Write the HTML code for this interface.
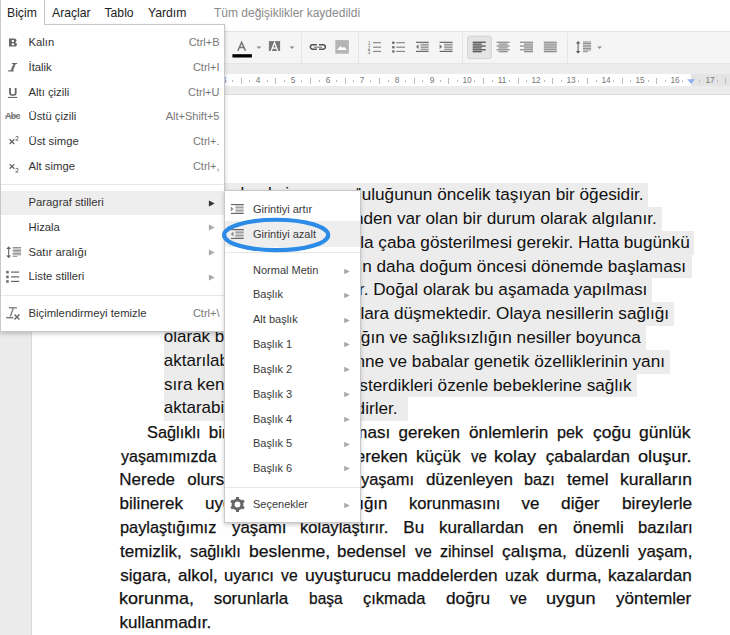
<!DOCTYPE html><html><head><meta charset="utf-8"><style>
*{margin:0;padding:0;box-sizing:border-box}
html,body{width:730px;height:635px;overflow:hidden;background:#fff;font-family:"Liberation Sans",sans-serif;position:relative}
.ab{position:absolute}
#gutter{position:absolute;left:0;top:95px;width:32px;height:540px;background:#ebebeb;border-right:1px solid #dadada}
.sel{position:absolute;background:#ececec}
.t{position:absolute;font-size:17px;color:#111;white-space:pre;line-height:20px;height:20px}
.tb{-webkit-text-stroke:0.25px #111}
.j{text-align:justify;text-align-last:justify;overflow:visible}
.menu{position:absolute;background:#fff;border:1px solid #c8c8c8;box-shadow:0 2px 4px rgba(0,0,0,.2)}
.mi{position:absolute;font-size:11.3px;color:#333;line-height:13px;white-space:pre}
.sm{color:#3a3a3a;font-size:11px}
.sc{position:absolute;font-size:11px;color:#777;line-height:13px;white-space:pre;text-align:right}
.arr{position:absolute;width:0;height:0;border-left:5.5px solid #a8a8a8;border-top:2.7px solid transparent;border-bottom:2.7px solid transparent}
.sep{position:absolute;height:1px;background:#e8e8e8}
.mb{position:absolute;top:5.6px;font-size:12.2px;color:#222;line-height:15px;white-space:pre}
.rn{position:absolute;top:75.3px;font-size:9px;color:#777;line-height:10px;width:20px;text-align:center;transform:scaleX(0.92)}
.tk{position:absolute;background:#bdbdbd;width:1px}
</style></head><body>
<div id="gutter"></div>
<div class="sel" style="left:163.5px;top:183.00px;width:484.70px;height:23.9px"></div>
<div class="sel" style="left:163.5px;top:206.81px;width:498.00px;height:23.9px"></div>
<div class="sel" style="left:163.5px;top:230.62px;width:530.50px;height:23.9px"></div>
<div class="sel" style="left:163.5px;top:254.43px;width:528.50px;height:23.9px"></div>
<div class="sel" style="left:163.5px;top:278.24px;width:488.50px;height:23.9px"></div>
<div class="sel" style="left:163.5px;top:302.05px;width:510.10px;height:23.9px"></div>
<div class="sel" style="left:163.5px;top:325.86px;width:482.50px;height:23.9px"></div>
<div class="sel" style="left:163.5px;top:349.67px;width:506.00px;height:23.9px"></div>
<div class="sel" style="left:163.5px;top:373.48px;width:473.20px;height:23.9px"></div>
<div class="sel" style="left:163.5px;top:397.29px;width:244.90px;height:23.9px"></div>
<div class="t" style="left:358px;width:285.55px;top:184.10px;overflow:hidden;text-align:right;direction:ltr;font-size:17.2px"><span style="float:right">Anne ve bebek sağlığı toplum mutluluğunun öncelik taşıyan bir öğesidir.</span></div>
<div class="t" style="left:300px;width:356.75px;top:207.91px;overflow:hidden;text-align:right;direction:ltr;font-size:17.2px"><span style="float:right">çoğu zaman doğumdan öncesinden var olan bir durum olarak algılanır.</span></div>
<div class="t" style="left:300px;width:389.78px;top:231.72px;overflow:hidden;text-align:right;direction:ltr;font-size:17.2px"><span style="float:right">Bu nedenle daha fazla çaba gösterilmesi gerekir. Hatta bugünkü</span></div>
<div class="t" style="left:300px;width:386.12px;top:255.53px;overflow:hidden;text-align:right;direction:ltr;font-size:17.2px"><span style="float:right">çabalarının daha doğum öncesi dönemde başlaması</span></div>
<div class="t" style="left:300px;width:347.42px;top:279.34px;overflow:hidden;text-align:right;direction:ltr;font-size:17.2px"><span style="float:right">gerekir. Doğal olarak bu aşamada yapılması</span></div>
<div class="t" style="left:300px;width:369.02px;top:303.15px;overflow:hidden;text-align:right;direction:ltr;font-size:17.2px"><span style="float:right">görevler anne babalara düşmektedir. Olaya nesillerin sağlığı</span></div>
<div class="t" style="left:300px;width:340.80px;top:326.96px;overflow:hidden;text-align:right;direction:ltr;font-size:17.2px"><span style="float:right">bakıldığında sağlığın ve sağlıksızlığın nesiller boyunca</span></div>
<div class="t" style="left:300px;width:365.02px;top:350.77px;overflow:hidden;text-align:right;direction:ltr;font-size:17.2px"><span style="float:right">bildiği görülür. Anne ve babalar genetik özelliklerinin yanı</span></div>
<div class="t" style="left:300px;width:331.58px;top:374.58px;overflow:hidden;text-align:right;direction:ltr;font-size:17.2px"><span style="float:right">sağlıklarına gösterdikleri özenle bebeklerine sağlık</span></div>
<div class="t" style="left:300px;width:97.65px;top:398.39px;overflow:hidden;text-align:right;direction:ltr;font-size:17.2px"><span style="float:right">hastalık bırakabilmektedirler.</span></div>
<div class="t" style="left:240.45px;top:184.10px">l</div>
<div class="t" style="left:267.95px;top:184.10px">l</div>
<div class="t" style="left:285.16px;top:184.10px">i</div>
<div class="t" style="left:355.14px;top:184.10px">t</div>
<div class="t" style="left:163.79px;top:326.96px;width:60.21px;overflow:hidden">olarak bakıldığında</div>
<div class="t" style="left:163.78px;top:350.77px;width:60.22px;overflow:hidden">aktarılabildiği</div>
<div class="t" style="left:164.03px;top:374.58px;width:59.97px;overflow:hidden">sıra kendi</div>
<div class="t" style="left:163.78px;top:398.39px;width:60.22px;overflow:hidden">aktarabilirler</div>
<div class="t tb" style="left:147.26px;top:422.70px;transform:scaleX(0.9596);transform-origin:0 0">Sağlıklı</div>
<div class="t tb" style="left:208.80px;top:422.70px">bir</div>
<div class="t tb" style="left:325.89px;top:422.70px">alınması</div>
<div class="t tb" style="left:398.49px;top:422.70px">gereken</div>
<div class="t tb" style="left:468.78px;top:422.70px;transform:scaleX(1.0119);transform-origin:0 0">önlemlerin</div>
<div class="t tb" style="left:556.66px;top:422.70px;transform:scaleX(0.9498);transform-origin:0 0">pek</div>
<div class="t tb" style="left:592.66px;top:422.70px;transform:scaleX(1.0315);transform-origin:0 0">çoğu</div>
<div class="t tb" style="left:639.47px;top:422.70px;transform:scaleX(1.0282);transform-origin:0 0">günlük</div>
<div class="t tb" style="left:120.66px;top:446.51px;transform:scaleX(0.9431);transform-origin:0 0">yaşamımızda</div>
<div class="t tb" style="left:346.36px;top:446.51px">gereken</div>
<div class="t tb" style="left:415.85px;top:446.51px;transform:scaleX(1.0047);transform-origin:0 0">küçük</div>
<div class="t tb" style="left:470.75px;top:446.51px;transform:scaleX(0.8800);transform-origin:0 0">ve</div>
<div class="t tb" style="left:494.29px;top:446.51px;transform:scaleX(1.0567);transform-origin:0 0">kolay</div>
<div class="t tb" style="left:545.78px;top:446.51px">çabalardan</div>
<div class="t tb" style="left:638.14px;top:446.51px;transform:scaleX(1.0685);transform-origin:0 0">oluşur.</div>
<div class="t tb" style="left:119.31px;top:470.32px">Nerede</div>
<div class="t tb" style="left:187.29px;top:470.32px">olursak</div>
<div class="t tb" style="left:361.46px;top:470.32px;transform:scaleX(0.9675);transform-origin:0 0">yaşamı</div>
<div class="t tb" style="left:425.89px;top:470.32px">düzenleyen</div>
<div class="t tb" style="left:524.45px;top:470.32px;transform:scaleX(0.9554);transform-origin:0 0">bazı</div>
<div class="t tb" style="left:567.04px;top:470.32px">temel</div>
<div class="t tb" style="left:620.02px;top:470.32px;transform:scaleX(1.0315);transform-origin:0 0">kuralların</div>
<div class="t tb" style="left:119.60px;top:494.13px">bilinerek</div>
<div class="t tb" style="left:205.10px;top:494.13px">uygulanması</div>
<div class="t tb" style="left:328.00px;top:494.13px">sağlığın</div>
<div class="t tb" style="left:408.58px;top:494.13px;transform:scaleX(0.9765);transform-origin:0 0">korunmasını</div>
<div class="t tb" style="left:521.54px;top:494.13px">ve</div>
<div class="t tb" style="left:561.27px;top:494.13px;transform:scaleX(1.0200);transform-origin:0 0">diğer</div>
<div class="t tb" style="left:621.69px;top:494.13px;transform:scaleX(1.0161);transform-origin:0 0">bireylerle</div>
<div class="t tb" style="left:119.65px;top:517.94px;transform:scaleX(0.9620);transform-origin:0 0">paylaştığımız</div>
<div class="t tb" style="left:231.86px;top:517.94px;transform:scaleX(0.9932);transform-origin:0 0">yaşamı</div>
<div class="t tb" style="left:300.28px;top:517.94px;transform:scaleX(0.9734);transform-origin:0 0">kolaylaştırır.</div>
<div class="t tb" style="left:403.31px;top:517.94px">Bu</div>
<div class="t tb" style="left:438.55px;top:517.94px;transform:scaleX(1.0075);transform-origin:0 0">kurallardan</div>
<div class="t tb" style="left:538.15px;top:517.94px;transform:scaleX(1.0402);transform-origin:0 0">en</div>
<div class="t tb" style="left:572.68px;top:517.94px;transform:scaleX(1.0135);transform-origin:0 0">önemli</div>
<div class="t tb" style="left:637.93px;top:517.94px;transform:scaleX(0.9805);transform-origin:0 0">bazıları</div>
<div class="t tb" style="left:120.44px;top:541.75px;transform:scaleX(1.0056);transform-origin:0 0">temizlik,</div>
<div class="t tb" style="left:190.35px;top:541.75px;transform:scaleX(0.9592);transform-origin:0 0">sağlıklı</div>
<div class="t tb" style="left:248.56px;top:541.75px;transform:scaleX(1.0360);transform-origin:0 0">beslenme,</div>
<div class="t tb" style="left:337.31px;top:541.75px;transform:scaleX(0.9951);transform-origin:0 0">bedensel</div>
<div class="t tb" style="left:414.95px;top:541.75px;transform:scaleX(0.9300);transform-origin:0 0">ve</div>
<div class="t tb" style="left:440.45px;top:541.75px;transform:scaleX(0.9430);transform-origin:0 0">zihinsel</div>
<div class="t tb" style="left:502.26px;top:541.75px;transform:scaleX(1.0245);transform-origin:0 0">çalışma,</div>
<div class="t tb" style="left:574.98px;top:541.75px;transform:scaleX(1.0063);transform-origin:0 0">düzenli</div>
<div class="t tb" style="left:638.16px;top:541.75px;transform:scaleX(0.9920);transform-origin:0 0">yaşam,</div>
<div class="t tb" style="left:120.23px;top:565.56px">sigara,</div>
<div class="t tb" style="left:177.78px;top:565.56px;transform:scaleX(1.0038);transform-origin:0 0">alkol,</div>
<div class="t tb" style="left:223.92px;top:565.56px;transform:scaleX(0.9790);transform-origin:0 0">uyarıcı</div>
<div class="t tb" style="left:281.15px;top:565.56px;transform:scaleX(0.9265);transform-origin:0 0">ve</div>
<div class="t tb" style="left:304.86px;top:565.56px;transform:scaleX(1.0341);transform-origin:0 0">uyuşturucu</div>
<div class="t tb" style="left:397.46px;top:565.56px;transform:scaleX(1.0132);transform-origin:0 0">maddelerden</div>
<div class="t tb" style="left:504.78px;top:565.56px;transform:scaleX(0.9268);transform-origin:0 0">uzak</div>
<div class="t tb" style="left:546.25px;top:565.56px;transform:scaleX(1.0555);transform-origin:0 0">durma,</div>
<div class="t tb" style="left:608.24px;top:565.56px;transform:scaleX(1.0085);transform-origin:0 0">kazalardan</div>
<div class="t tb" style="left:119.49px;top:589.37px;transform:scaleX(1.0570);transform-origin:0 0">korunma,</div>
<div class="t tb" style="left:213.63px;top:589.37px">sorunlarla</div>
<div class="t tb" style="left:308.60px;top:589.37px;transform:scaleX(0.9135);transform-origin:0 0">başa</div>
<div class="t tb" style="left:362.90px;top:589.37px;transform:scaleX(0.9709);transform-origin:0 0">çıkmada</div>
<div class="t tb" style="left:445.88px;top:589.37px;transform:scaleX(1.0129);transform-origin:0 0">doğru</div>
<div class="t tb" style="left:510.05px;top:589.37px;transform:scaleX(0.9378);transform-origin:0 0">ve</div>
<div class="t tb" style="left:546.32px;top:589.37px;transform:scaleX(1.0695);transform-origin:0 0">uygun</div>
<div class="t tb" style="left:615.96px;top:589.37px;transform:scaleX(1.0092);transform-origin:0 0">yöntemler</div>
<div class="t tb" style="left:119.55px;top:613.18px">kullanmadır.</div>
<div class="ab" style="left:0;top:64px;width:730px;height:31px;background:#ececec;border-bottom:1px solid #dcdcdc"></div>
<div class="ab" style="left:32px;top:74px;width:659px;height:12px;background:#fff"></div>
<div class="ab" style="left:691px;top:74px;width:39px;height:12px;background:#e4e4e4"></div>
<div class="rn" style="left:144.5px">1</div>
<div class="tk" style="left:145.3px;top:80px;height:2px"></div>
<div class="tk" style="left:162.6px;top:80px;height:2px"></div>
<div class="tk" style="left:171.3px;top:77.5px;height:6px"></div>
<div class="rn" style="left:179.1px">2</div>
<div class="tk" style="left:180.0px;top:80px;height:2px"></div>
<div class="tk" style="left:197.3px;top:80px;height:2px"></div>
<div class="tk" style="left:205.9px;top:77.5px;height:6px"></div>
<div class="rn" style="left:213.7px">3</div>
<div class="tk" style="left:214.6px;top:80px;height:2px"></div>
<div class="tk" style="left:231.9px;top:80px;height:2px"></div>
<div class="tk" style="left:240.6px;top:77.5px;height:6px"></div>
<div class="rn" style="left:248.4px">4</div>
<div class="tk" style="left:249.2px;top:80px;height:2px"></div>
<div class="tk" style="left:266.5px;top:80px;height:2px"></div>
<div class="tk" style="left:275.2px;top:77.5px;height:6px"></div>
<div class="rn" style="left:283.0px">5</div>
<div class="tk" style="left:283.8px;top:80px;height:2px"></div>
<div class="tk" style="left:301.2px;top:80px;height:2px"></div>
<div class="tk" style="left:309.8px;top:77.5px;height:6px"></div>
<div class="rn" style="left:317.6px">6</div>
<div class="tk" style="left:318.5px;top:80px;height:2px"></div>
<div class="tk" style="left:335.8px;top:80px;height:2px"></div>
<div class="tk" style="left:344.5px;top:77.5px;height:6px"></div>
<div class="rn" style="left:352.3px">7</div>
<div class="tk" style="left:353.1px;top:80px;height:2px"></div>
<div class="tk" style="left:370.4px;top:80px;height:2px"></div>
<div class="tk" style="left:379.1px;top:77.5px;height:6px"></div>
<div class="rn" style="left:386.9px">8</div>
<div class="tk" style="left:387.7px;top:80px;height:2px"></div>
<div class="tk" style="left:405.1px;top:80px;height:2px"></div>
<div class="tk" style="left:413.7px;top:77.5px;height:6px"></div>
<div class="rn" style="left:421.5px">9</div>
<div class="tk" style="left:422.4px;top:80px;height:2px"></div>
<div class="tk" style="left:439.7px;top:80px;height:2px"></div>
<div class="tk" style="left:448.4px;top:77.5px;height:6px"></div>
<div class="rn" style="left:457.2px">10</div>
<div class="tk" style="left:457.0px;top:80px;height:2px"></div>
<div class="tk" style="left:474.3px;top:80px;height:2px"></div>
<div class="tk" style="left:483.0px;top:77.5px;height:6px"></div>
<div class="rn" style="left:491.8px">11</div>
<div class="tk" style="left:491.6px;top:80px;height:2px"></div>
<div class="tk" style="left:508.9px;top:80px;height:2px"></div>
<div class="tk" style="left:517.6px;top:77.5px;height:6px"></div>
<div class="rn" style="left:526.4px">12</div>
<div class="tk" style="left:526.3px;top:80px;height:2px"></div>
<div class="tk" style="left:543.6px;top:80px;height:2px"></div>
<div class="tk" style="left:552.2px;top:77.5px;height:6px"></div>
<div class="rn" style="left:561.0px">13</div>
<div class="tk" style="left:560.9px;top:80px;height:2px"></div>
<div class="tk" style="left:578.2px;top:80px;height:2px"></div>
<div class="tk" style="left:586.9px;top:77.5px;height:6px"></div>
<div class="rn" style="left:595.7px">14</div>
<div class="tk" style="left:595.5px;top:80px;height:2px"></div>
<div class="tk" style="left:612.8px;top:80px;height:2px"></div>
<div class="tk" style="left:621.5px;top:77.5px;height:6px"></div>
<div class="rn" style="left:630.3px">15</div>
<div class="tk" style="left:630.1px;top:80px;height:2px"></div>
<div class="tk" style="left:647.5px;top:80px;height:2px"></div>
<div class="tk" style="left:656.1px;top:77.5px;height:6px"></div>
<div class="rn" style="left:664.9px">16</div>
<div class="tk" style="left:664.8px;top:80px;height:2px"></div>
<div class="tk" style="left:682.1px;top:80px;height:2px"></div>
<div class="rn" style="left:699.6px">17</div>
<div class="tk" style="left:699.4px;top:80px;height:2px"></div>
<div class="tk" style="left:716.7px;top:80px;height:2px"></div>
<div class="tk" style="left:725.4px;top:77.5px;height:6px"></div>
<svg class="ab" style="left:685px;top:77px" width="12" height="9"><path d="M2.2 2.2 L10.1 2.2 L6.15 7 Z" fill="#8eb2f0"/></svg>
<div class="ab" style="left:0;top:31px;width:730px;height:33px;background:#f5f5f5;border-top:1px solid #e2e2e2;border-bottom:1px solid #e5e5e5"></div>
<svg class="ab" style="left:0;top:0" width="730" height="100"><rect x="301.0" y="33" width="1" height="30" fill="#e4e4e4"/><rect x="358.0" y="33" width="1" height="30" fill="#e4e4e4"/><rect x="462.0" y="33" width="1" height="30" fill="#e4e4e4"/><rect x="567.0" y="33" width="1" height="30" fill="#e4e4e4"/><path d="M237.8 50.9 L241.65 42.2 L245.5 50.9 M239.3 47.5 H244" stroke="#777" stroke-width="1.45" fill="none"/><rect x="232.4" y="54.2" width="19.5" height="3.3" fill="#000"/><path d="M256.6 46.6 h4.6 l-2.3 2.4 z" fill="#888"/><path d="M289.6 46.6 h4.6 l-2.3 2.4 z" fill="#888"/><path d="M597.3 46.6 h4.6 l-2.3 2.4 z" fill="#888"/><rect x="268.9" y="41.1" width="11.2" height="9.9" fill="#777"/><path d="M271.2 51 L274.5 42.6 L277.8 51 M272.6 48.1 H276.4" stroke="#fff" stroke-width="1.3" fill="none"/><g fill="none" stroke="#555" stroke-width="1.5"><path d="M316.9 44.65 H312.6 A2.25 2.25 0 0 0 312.6 49.15 H316.9"/><path d="M319 44.65 H323.1 A2.25 2.25 0 0 1 323.1 49.15 H319"/></g><rect x="314" y="46.6" width="8" height="1.3" fill="#8a8a8a"/><rect x="335.3" y="40.1" width="13.6" height="13.6" fill="#b5b5b5"/><path d="M337 50 L340.5 46 L342.5 48 L344 46.7 L347 50 Z" fill="#fff"/><g fill="#666"><rect x="373" y="42.150000000000006" width="8" height="1.1" fill="#808080"/><rect x="396.2" y="42.150000000000006" width="8.8" height="1.1" fill="#808080"/><rect x="392.2" y="41.6" width="2.3" height="2.3"/><rect x="373" y="46.650000000000006" width="8" height="1.1" fill="#808080"/><rect x="396.2" y="46.650000000000006" width="8.8" height="1.1" fill="#808080"/><rect x="392.2" y="46.1" width="2.3" height="2.3"/><rect x="373" y="50.85" width="8" height="1.1" fill="#808080"/><rect x="396.2" y="50.85" width="8.8" height="1.1" fill="#808080"/><rect x="392.2" y="50.3" width="2.3" height="2.3"/></g><text x="368" y="45" font-family="Liberation Sans" font-size="4.5" fill="#666">1</text><text x="367.8" y="49.5" font-family="Liberation Sans" font-size="4.5" fill="#666">2</text><text x="367.8" y="53.7" font-family="Liberation Sans" font-size="4.5" fill="#666">3</text><rect x="416" y="41.7" width="12.7" height="1.2" fill="#666"/><rect x="416" y="50.8" width="12.7" height="1.2" fill="#666"/><rect x="420.5" y="43.800000000000004" width="8.2" height="1" fill="#888"/><rect x="420.5" y="45.50000000000001" width="8.2" height="1" fill="#888"/><rect x="420.5" y="47.2" width="8.2" height="1" fill="#888"/><rect x="420.5" y="48.900000000000006" width="8.2" height="1" fill="#888"/><path d="M418.6 44.35 L416 46.85 L418.6 49.35 Z" fill="#777"/><rect x="439.6" y="41.7" width="13" height="1.2" fill="#666"/><rect x="439.6" y="50.8" width="13" height="1.2" fill="#666"/><rect x="444.1" y="43.800000000000004" width="8.5" height="1" fill="#888"/><rect x="444.1" y="45.50000000000001" width="8.5" height="1" fill="#888"/><rect x="444.1" y="47.2" width="8.5" height="1" fill="#888"/><rect x="444.1" y="48.900000000000006" width="8.5" height="1" fill="#888"/><path d="M439.6 44.35 L442.20000000000005 46.85 L439.6 49.35 Z" fill="#777"/><rect x="467.7" y="36.2" width="23.6" height="22.5" rx="2" fill="#e4e4e4" stroke="#d2d2d2" stroke-width="1"/><rect x="472.7" y="41.7" width="13" height="1.05" fill="#333"/><rect x="472.7" y="43.6" width="9" height="1.05" fill="#333"/><rect x="472.7" y="45.5" width="13" height="1.05" fill="#333"/><rect x="472.7" y="47.4" width="9" height="1.05" fill="#333"/><rect x="472.7" y="49.3" width="13" height="1.05" fill="#333"/><rect x="472.7" y="51.2" width="9" height="1.05" fill="#333"/><rect x="496.6" y="41.7" width="13" height="1.05" fill="#777"/><rect x="498.6" y="43.6" width="9" height="1.05" fill="#777"/><rect x="496.6" y="45.5" width="13" height="1.05" fill="#777"/><rect x="498.6" y="47.4" width="9" height="1.05" fill="#777"/><rect x="496.6" y="49.3" width="13" height="1.05" fill="#777"/><rect x="498.6" y="51.2" width="9" height="1.05" fill="#777"/><rect x="520" y="41.7" width="13" height="1.05" fill="#777"/><rect x="524" y="43.6" width="9" height="1.05" fill="#777"/><rect x="520" y="45.5" width="13" height="1.05" fill="#777"/><rect x="524" y="47.4" width="9" height="1.05" fill="#777"/><rect x="520" y="49.3" width="13" height="1.05" fill="#777"/><rect x="524" y="51.2" width="9" height="1.05" fill="#777"/><rect x="543.8" y="41.7" width="13" height="1.05" fill="#777"/><rect x="543.8" y="43.6" width="13" height="1.05" fill="#777"/><rect x="543.8" y="45.5" width="13" height="1.05" fill="#777"/><rect x="543.8" y="47.4" width="13" height="1.05" fill="#777"/><rect x="543.8" y="49.3" width="13" height="1.05" fill="#777"/><rect x="543.8" y="51.2" width="13" height="1.05" fill="#777"/><g fill="#555"><rect x="577.6" y="42.5" width="1" height="9.5"/><path d="M575.9 43.6 L578.1 41 L580.3 43.6 Z"/><path d="M575.9 51 L578.1 53.6 L580.3 51 Z"/></g><g fill="#888"><rect x="582.9" y="41.5" width="8.2" height="1"/><rect x="582.9" y="43.1" width="8.2" height="1"/><rect x="582.9" y="44.7" width="8.2" height="1"/><rect x="582.9" y="46.3" width="8.2" height="1"/><rect x="582.9" y="47.9" width="8.2" height="1"/><rect x="582.9" y="49.5" width="8.2" height="1"/><rect x="582.9" y="51.2" width="5" height="1"/></g></svg>
<div class="ab" style="left:0;top:0;width:730px;height:31px;background:#fff"></div>
<div class="mb" style="left:7px">Biçim</div>
<div class="mb" style="left:52px">Araçlar</div>
<div class="mb" style="left:104.5px">Tablo</div>
<div class="mb" style="left:148px">Yardım</div>
<div class="mb" style="left:214px;color:#8a8a8a;font-size:12px">Tüm değişiklikler kaydedildi</div>
<div class="menu" style="left:0;top:24px;width:225px;height:307.5px"></div>
<div class="ab" style="left:0;top:-2px;width:45px;height:27px;background:#fff;border:1px solid #c8c8c8;border-bottom:none"></div>
<div class="mb" style="left:7px">Biçim</div>
<div class="ab" style="left:1px;top:190.5px;width:223px;height:24px;background:#eeeeee"></div>
<div class="mi" style="left:28.5px;top:36.2px">Kalın</div>
<div class="sc" style="left:120px;width:99.5px;top:36.2px">Ctrl+B</div>
<div class="mi" style="left:28.5px;top:60.9px">İtalik</div>
<div class="sc" style="left:120px;width:99.5px;top:60.9px">Ctrl+I</div>
<div class="mi" style="left:28.5px;top:85.6px">Altı çizili</div>
<div class="sc" style="left:120px;width:99.5px;top:85.6px">Ctrl+U</div>
<div class="mi" style="left:28.5px;top:110.3px">Üstü çizili</div>
<div class="sc" style="left:120px;width:99.5px;top:110.3px">Alt+Shift+5</div>
<div class="mi" style="left:28.5px;top:135.0px">Üst simge</div>
<div class="sc" style="left:120px;width:99.5px;top:135.0px">Ctrl+.</div>
<div class="mi" style="left:28.5px;top:159.7px">Alt simge</div>
<div class="sc" style="left:120px;width:99.5px;top:159.7px">Ctrl+,</div>
<div class="sep" style="left:1px;top:184px;width:223px"></div>
<div class="mi" style="left:28.5px;top:196.4px">Paragraf stilleri</div>
<svg class="ab" style="left:205px;top:192.70px" width="14" height="20"><path d="M3.9 7.60 L9.7 10.5 L3.9 13.40 Z" fill="#333"/></svg>
<div class="mi" style="left:28.5px;top:221.0px">Hizala</div>
<svg class="ab" style="left:205px;top:217.30px" width="14" height="20"><path d="M3.9 7.60 L9.7 10.5 L3.9 13.40 Z" fill="#aaa"/></svg>
<div class="mi" style="left:28.5px;top:245.5px">Satır aralığı</div>
<svg class="ab" style="left:205px;top:241.80px" width="14" height="20"><path d="M3.9 7.60 L9.7 10.5 L3.9 13.40 Z" fill="#aaa"/></svg>
<div class="mi" style="left:28.5px;top:270.2px">Liste stilleri</div>
<svg class="ab" style="left:205px;top:266.50px" width="14" height="20"><path d="M3.9 7.60 L9.7 10.5 L3.9 13.40 Z" fill="#aaa"/></svg>
<div class="sep" style="left:1px;top:294.5px;width:223px"></div>
<div class="mi" style="left:28.5px;top:306.7px">Biçimlendirmeyi temizle</div>
<div class="sc" style="left:120px;width:99.5px;top:306.7px">Ctrl+\</div>
<svg class="ab" style="left:0;top:0" width="225" height="335"><path fill="#666" fill-rule="evenodd" d="M9 38.5 H14.1 C15.9 38.5 16.5 39.6 16.5 40.6 C16.5 41.6 15.9 42.2 15.2 42.45 C16.2 42.7 16.9 43.5 16.9 44.5 C16.9 45.9 15.9 46.6 14.3 46.6 H9 Z M11.8 39.9 H13.1 C13.8 39.9 14.0 40.4 14.0 41.0 C14.0 41.6 13.7 42.0 13.1 42.0 H11.8 Z M11.8 43.2 H13.2 C13.9 43.2 14.2 43.7 14.2 44.3 C14.2 44.9 13.9 45.3 13.2 45.3 H11.8 Z"/><g fill="#666"><path d="M12.1 62.9 L17.3 62.9 L17.0 64.0 L11.8 64.0 Z"/><path d="M13.7 63.5 L15.9 63.5 L12.9 70.4 L10.6 70.4 Z"/><path d="M8.4 70.2 L13.9 70.2 L13.6 71.4 L8.1 71.4 Z"/></g><path fill="#666" d="M9.1 87.9 H10.9 V92.7 C10.9 93.8 11.7 94.3 12.85 94.3 C14 94.3 14.8 93.8 14.8 92.7 V87.9 H16.6 V92.9 C16.6 94.8 15.1 95.8 12.85 95.8 C10.6 95.8 9.1 94.8 9.1 92.9 Z"/><rect x="8.1" y="96.9" width="9.1" height="1.1" fill="#666"/><text x="5" y="118.7" font-family="Liberation Sans" font-weight="bold" font-size="9" fill="#777" letter-spacing="-0.7">Abc</text><rect x="5.2" y="115.7" width="14.6" height="0.9" fill="#777"/><path d="M9.6 139.3 L14.3 144 M14.3 139.3 L9.6 144" stroke="#666" stroke-width="1.3"/><path d="M15.7 137.4 C15.9 136.70000000000002 16.5 136.3 17.0 136.3 C17.7 136.3 18.1 136.8 18.1 137.4 C18.1 138.3 17.2 139.10000000000002 15.7 140.20000000000002 H18.3" stroke="#666" stroke-width="0.95" fill="none"/><path d="M9.6 164.10000000000002 L14.3 168.8 M14.3 164.10000000000002 L9.6 168.8" stroke="#666" stroke-width="1.3"/><path d="M15.7 169.29999999999998 C15.9 168.6 16.5 168.2 17.0 168.2 C17.7 168.2 18.1 168.7 18.1 169.29999999999998 C18.1 170.2 17.2 171.0 15.7 172.1 H18.3" stroke="#666" stroke-width="0.95" fill="none"/><g fill="#666"><rect x="8.1" y="247.5" width="1.1" height="9.6"/><path d="M6.2 249 L8.65 246.2 L11.1 249 Z"/><path d="M6.2 255.6 L8.65 258.3 L11.1 255.6 Z"/></g><g fill="#888"><rect x="12.7" y="247.1" width="8.4" height="0.9"/><rect x="12.7" y="248.54999999999998" width="8.4" height="0.9"/><rect x="12.7" y="250.0" width="8.4" height="0.9"/><rect x="12.7" y="251.45" width="8.4" height="0.9"/><rect x="12.7" y="252.9" width="8.4" height="0.9"/><rect x="12.7" y="254.35" width="8.4" height="0.9"/><rect x="12.7" y="255.9" width="4.5" height="0.9"/></g><g fill="#666"><rect x="6.2" y="270.90000000000003" width="2.5" height="2.5"/><rect x="11" y="271.5" width="8.2" height="1.2"/><rect x="6.2" y="275.7" width="2.5" height="2.5"/><rect x="11" y="276.29999999999995" width="8.2" height="1.2"/><rect x="6.2" y="280.2" width="2.5" height="2.5"/><rect x="11" y="280.79999999999995" width="8.2" height="1.2"/></g><g fill="#777"><rect x="9" y="307.1" width="7.9" height="1.3"/><path d="M12.6 308.3 L14.0 308.3 L11.0 316.6 L9.6 316.6 Z"/><rect x="6.2" y="317" width="7.2" height="1.4"/></g><path d="M14.5 314.6 L19.4 319.5 M19.4 314.6 L14.5 319.5" stroke="#666" stroke-width="1.4"/></svg>
<div class="menu" style="left:224px;top:190px;width:137px;height:332.5px"></div>
<div class="ab" style="left:225px;top:221px;width:135px;height:25.5px;background:#eeeeee"></div>
<div class="mi sm" style="left:253px;top:202.6px">Girintiyi artır</div>
<div class="mi sm" style="left:253px;top:227.6px">Girintiyi azalt</div>
<div class="mi sm" style="left:253px;top:264.3px">Normal Metin</div>
<svg class="ab" style="left:340px;top:260.70px" width="14" height="20"><path d="M4.2 7.70 L9.9 10.5 L4.2 13.30 Z" fill="#aaa"/></svg>
<div class="mi sm" style="left:253px;top:288.4px">Başlık</div>
<svg class="ab" style="left:340px;top:284.80px" width="14" height="20"><path d="M4.2 7.70 L9.9 10.5 L4.2 13.30 Z" fill="#aaa"/></svg>
<div class="mi sm" style="left:253px;top:313.3px">Alt başlık</div>
<svg class="ab" style="left:340px;top:309.70px" width="14" height="20"><path d="M4.2 7.70 L9.9 10.5 L4.2 13.30 Z" fill="#aaa"/></svg>
<div class="mi sm" style="left:253px;top:337.9px">Başlık 1</div>
<svg class="ab" style="left:340px;top:334.30px" width="14" height="20"><path d="M4.2 7.70 L9.9 10.5 L4.2 13.30 Z" fill="#aaa"/></svg>
<div class="mi sm" style="left:253px;top:362.9px">Başlık 2</div>
<svg class="ab" style="left:340px;top:359.30px" width="14" height="20"><path d="M4.2 7.70 L9.9 10.5 L4.2 13.30 Z" fill="#aaa"/></svg>
<div class="mi sm" style="left:253px;top:387.7px">Başlık 3</div>
<svg class="ab" style="left:340px;top:384.10px" width="14" height="20"><path d="M4.2 7.70 L9.9 10.5 L4.2 13.30 Z" fill="#aaa"/></svg>
<div class="mi sm" style="left:253px;top:412.6px">Başlık 4</div>
<svg class="ab" style="left:340px;top:409.00px" width="14" height="20"><path d="M4.2 7.70 L9.9 10.5 L4.2 13.30 Z" fill="#aaa"/></svg>
<div class="mi sm" style="left:253px;top:437.4px">Başlık 5</div>
<svg class="ab" style="left:340px;top:433.80px" width="14" height="20"><path d="M4.2 7.70 L9.9 10.5 L4.2 13.30 Z" fill="#aaa"/></svg>
<div class="mi sm" style="left:253px;top:461.6px">Başlık 6</div>
<svg class="ab" style="left:340px;top:458.00px" width="14" height="20"><path d="M4.2 7.70 L9.9 10.5 L4.2 13.30 Z" fill="#aaa"/></svg>
<div class="mi sm" style="left:253px;top:498.3px">Seçenekler</div>
<svg class="ab" style="left:340px;top:494.70px" width="14" height="20"><path d="M4.2 7.70 L9.9 10.5 L4.2 13.30 Z" fill="#aaa"/></svg>
<div class="sep" style="left:225px;top:252px;width:135px"></div>
<div class="sep" style="left:225px;top:486.5px;width:135px"></div>
<svg class="ab" style="left:0;top:0" width="400" height="540"><rect x="230.9" y="204" width="12.8" height="1.1" fill="#666"/><rect x="230.9" y="212.9" width="12.8" height="1.1" fill="#666"/><rect x="235.4" y="205.65" width="8.3" height="0.9" fill="#999"/><rect x="235.4" y="207.1" width="8.3" height="0.9" fill="#999"/><rect x="235.4" y="208.55" width="8.3" height="0.9" fill="#999"/><rect x="235.4" y="210.0" width="8.3" height="0.9" fill="#999"/><rect x="235.4" y="211.45000000000002" width="8.3" height="0.9" fill="#999"/><path d="M230.9 206.6 L233.5 209.0 L230.9 211.4 Z" fill="#888"/><rect x="230.9" y="229" width="12.8" height="1.1" fill="#666"/><rect x="230.9" y="237.9" width="12.8" height="1.1" fill="#666"/><rect x="235.4" y="230.65" width="8.3" height="0.9" fill="#999"/><rect x="235.4" y="232.1" width="8.3" height="0.9" fill="#999"/><rect x="235.4" y="233.55" width="8.3" height="0.9" fill="#999"/><rect x="235.4" y="235.0" width="8.3" height="0.9" fill="#999"/><rect x="235.4" y="236.45000000000002" width="8.3" height="0.9" fill="#999"/><path d="M233.5 231.6 L230.9 234.0 L233.5 236.4 Z" fill="#888"/><path d="M234.57 499.38 L235.98 498.80 L235.99 497.05 L239.01 497.05 L239.02 498.80 L240.43 499.38 L240.47 499.40 L241.68 500.34 L243.20 499.47 L244.71 502.08 L243.20 502.96 L243.40 504.48 L243.40 504.52 L243.20 506.04 L244.71 506.92 L243.20 509.53 L241.68 508.66 L240.47 509.60 L240.43 509.62 L239.02 510.20 L239.01 511.95 L235.99 511.95 L235.98 510.20 L234.57 509.62 L234.53 509.60 L233.32 508.66 L231.80 509.53 L230.29 506.92 L231.80 506.04 L231.60 504.52 L231.60 504.48 L231.80 502.96 L230.29 502.08 L231.80 499.47 L233.32 500.34 L234.53 499.40 Z M240.4 504.5 A2.9 2.9 0 1 0 234.6 504.5 A2.9 2.9 0 1 0 240.4 504.5 Z" fill="#666" fill-rule="evenodd"/><ellipse cx="276.15" cy="234.95" rx="52" ry="15.2" fill="none" stroke="#2b8be6" stroke-width="4.2"/></svg>
</body></html>
